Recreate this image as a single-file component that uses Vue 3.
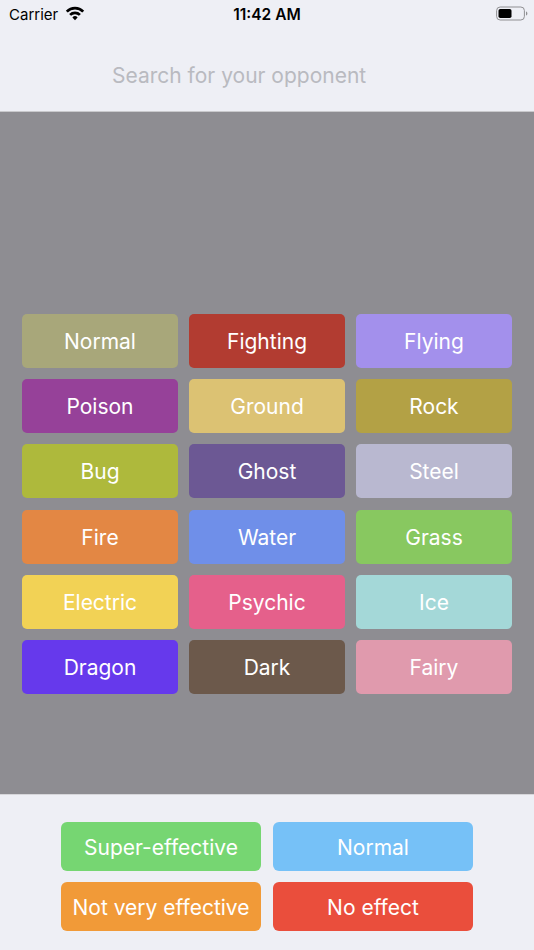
<script setup>
const types = [
  ['Normal', '#a8a77a'], ['Fighting', '#b23c31'], ['Flying', '#a390ec'],
  ['Poison', '#964199'], ['Ground', '#dcc273'], ['Rock', '#b3a145'],
  ['Bug', '#aeb93c'], ['Ghost', '#6c5894'], ['Steel', '#b9b8d0'],
  ['Fire', '#e38744'], ['Water', '#6f8fe9'], ['Grass', '#88c860'],
  ['Electric', '#f2d255'], ['Psychic', '#e5608b'], ['Ice', '#a4d8d8'],
  ['Dragon', '#6639ec'], ['Dark', '#6c594b'], ['Fairy', '#e09aad'],
]
const legend = [
  ['Super-effective', '#76d672'], ['Normal', '#76c1f7'],
  ['Not very effective', '#f19a38'], ['No effect', '#ea4e3c'],
]
</script>

<template>
  <div class="screen">
    <header class="top">
      <div class="status">
        <div class="status-left">
          <span class="carrier">Carrier</span>
          <svg class="wifi" width="20" height="15" viewBox="0 0 19 14">
            <path d="M1.7 5.2A11 11 0 0 1 17.3 5.2" fill="none" stroke="#000" stroke-width="2.6"/>
            <path d="M4.83 8.33A6.6 6.6 0 0 1 14.17 8.33" fill="none" stroke="#000" stroke-width="2.6"/>
            <path d="M9.5 13.4L7 10.7A3.6 3.6 0 0 1 12 10.7z" fill="#000"/>
          </svg>
        </div>
        <span class="time">11:42 AM</span>
        <svg class="battery" width="32" height="15" viewBox="0 0 32 15">
          <rect x="0.6" y="1" width="27.8" height="13" rx="3.6" fill="none" stroke="#8f8f92" stroke-width="1"/>
          <rect x="2.5" y="3" width="13" height="9" rx="1.8" fill="#000"/>
          <path d="M30 5.4c.9.3 1.4 1.1 1.4 2.1s-.5 1.8-1.4 2.1z" fill="#8f8f92"/>
        </svg>
      </div>
      <div class="search">Search for your opponent</div>
    </header>

    <main class="board">
      <div class="type-grid">
        <div v-for="t in types" :key="t[0]" class="type" :style="{ background: t[1] }">{{ t[0] }}</div>
      </div>
    </main>

    <footer class="legend">
      <div v-for="l in legend" :key="l[0]" class="legend-item" :style="{ background: l[1] }">{{ l[0] }}</div>
    </footer>
  </div>
</template>

<style scoped>
.screen {
  width: 534px;
  height: 950px;
  display: flex;
  flex-direction: column;
  background: #eeeff5;
  font-family: Inter, "Liberation Sans", sans-serif;
  overflow: hidden;
}
.top {
  height: 112px;
  flex: none;
  display: flex;
  flex-direction: column;
  box-sizing: border-box;
  border-bottom: 1px solid #c9c9cc;
}
.status {
  height: 27px;
  display: flex;
  align-items: center;
  justify-content: space-between;
  padding: 0 6px 0 9px;
  position: relative;
}
.status-left {
  display: flex;
  align-items: center;
  gap: 7px;
}
.carrier {
  font-size: 15px;
  color: #000;
  padding-top: 1px;
}
.time {
  position: absolute;
  left: 0;
  right: 0;
  text-align: center;
  font-size: 15.5px;
  font-weight: 600;
  color: #000;
  padding-top: 1px;
}
.search {
  margin-top: 36px;
  padding-left: 112px;
  font-size: 21px;
  line-height: 26px;
  color: #b9bac0;
  font-weight: 370;
}
.board {
  flex: 1;
  background: #8e8d92;
  display: flex;
  align-items: flex-start;
  justify-content: center;
  padding-top: 202px;
}
.type-grid {
  display: grid;
  grid-template-columns: repeat(3, 156px);
  grid-auto-rows: 54px;
  column-gap: 11px;
  row-gap: 11.2px;
}
.type {
  border-radius: 5px;
  display: flex;
  align-items: center;
  justify-content: center;
  color: #fff;
  font-size: 21px;
  font-weight: 370;
  padding-top: 1px;
}
.legend {
  flex: none;
  height: 156px;
  box-sizing: border-box;
  padding-top: 27px;
  border-top: 1px solid #d6d6da;
  display: grid;
  grid-template-columns: repeat(2, 200px);
  grid-auto-rows: 49px;
  justify-content: center;
  column-gap: 12px;
  row-gap: 11px;
}
.legend-item {
  border-radius: 6px;
  display: flex;
  align-items: center;
  justify-content: center;
  color: #fff;
  font-size: 21px;
  font-weight: 370;
  padding-top: 1px;
}
</style>
